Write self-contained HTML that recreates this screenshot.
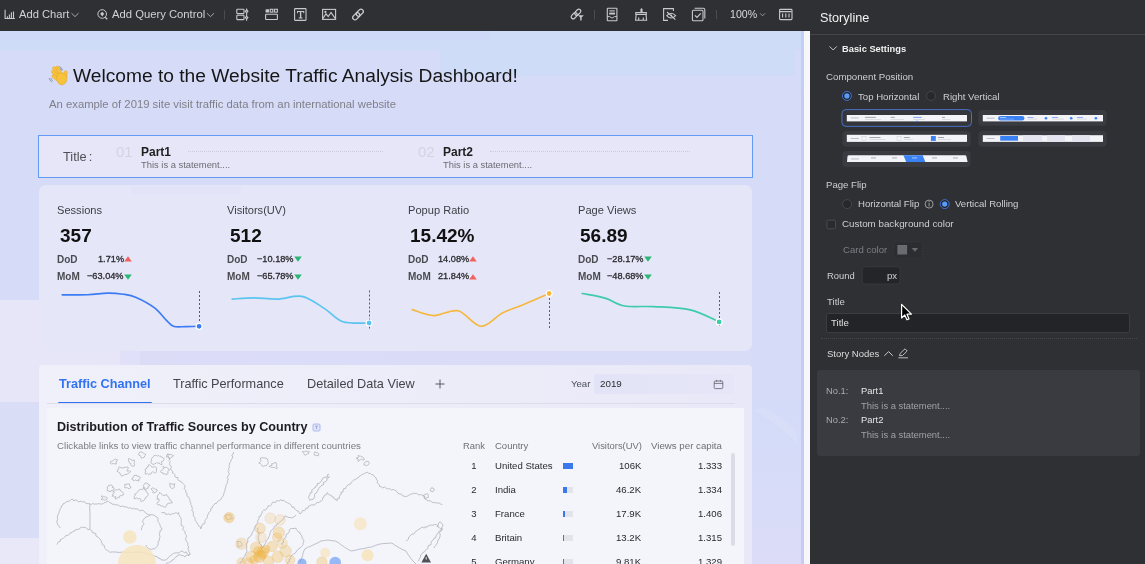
<!DOCTYPE html>
<html><head><meta charset="utf-8"><style>
html,body{margin:0;padding:0;width:1145px;height:564px;overflow:hidden;background:#303135;}
body{position:relative;font-family:"Liberation Sans",sans-serif;-webkit-font-smoothing:antialiased;}
.t{position:absolute;white-space:pre;line-height:1;will-change:transform;}
.r{position:absolute;}
</style></head><body>
<div class="r" style="left:0px;top:31px;width:801px;height:533px;background:#d6dbf8;"></div><div class="r" style="left:0px;top:31px;width:801px;height:19px;background:#cedcf8;"></div><div class="r" style="left:0px;top:31px;width:490px;height:9px;background:repeating-conic-gradient(#d2d9f8 0 25%,#cbdaf8 0 50%) 0 0/2px 2px;"></div><div class="r" style="left:440px;top:47px;width:355px;height:29px;background:#cedcf8;"></div><div class="r" style="left:0px;top:300px;width:120px;height:102px;background:#e6e6f8;"></div><div class="r" style="left:120px;top:351px;width:20px;height:14px;background:#e0e1f8;"></div><div class="r" style="left:140px;top:351px;width:612px;height:14px;background:linear-gradient(90deg,#dcdcf7,#dadcf7 60%,#d9dcf7);"></div><div class="r" style="left:0px;top:538px;width:60px;height:26px;background:#e8e8f8;"></div><div class="r" style="left:0px;top:402px;width:39px;height:136px;background:#d9ddf6;"></div><div class="r" style="left:752px;top:400px;width:49px;height:164px;background:linear-gradient(180deg,#d3dbf8 0%,#d7dcf8 50%,#dcdcf8 100%);"></div><svg class="r" style="left:752px;top:400px" width="49" height="50"><path d="M2 10 L20 22 L40 38 L46 44 L44 30 L30 18 L12 8Z" fill="#e0e2f8" fill-opacity="0.45"/></svg><div class="r" style="left:801px;top:31px;width:3px;height:533px;background:#c6cbf3;"></div><div class="r" style="left:801px;top:31px;width:3px;height:60px;background:#bfd0f6;"></div><div class="r" style="left:804px;top:31px;width:6px;height:533px;background:#f6f6fb;"></div><div class="r" style="left:0px;top:0px;width:810px;height:31px;background:#2f3034;"></div><div class="r" style="left:810px;top:0px;width:335px;height:564px;background:#2f3034;"></div><div class="r" style="left:810px;top:34px;width:335px;height:1px;background:#45464b;"></div><div class="t " style="left:73.10px;top:65.55px;font-size:19.2px;color:#161616;font-weight:normal;">Welcome to the Website Traffic Analysis Dashboard!</div><div class="t " style="left:48.70px;top:98.93px;font-size:11.3px;color:#7f8088;font-weight:normal;">An example of 2019 site visit traffic data from an international website</div><svg class="r" style="left:44px;top:62px" width="28" height="26">
<g fill="none" stroke="#8f96a8" stroke-width="1" stroke-linecap="round">
<path d="M15.6 4.6 Q17.6 5.4 18.4 7.8"/><path d="M16.2 6.6 Q17.2 7 17.6 8.4"/>
<path d="M5.2 16.6 Q5.8 18.8 8 19.8"/><path d="M6.8 16.4 Q7.2 17.8 8.4 18.4"/>
</g>
<g fill="#f7c23c" stroke="#e3a427" stroke-width="0.5">
<path d="M13.5 14.2 L8.6 6.8 A1.6 1.6 0 0 1 11.3 5.2 L16.4 12.4Z"/>
<path d="M14.8 12.8 L11.8 5.9 A1.6 1.6 0 0 1 14.6 4.6 L17.8 11.4Z"/>
<path d="M12.8 16.4 L7.6 10.6 A1.6 1.6 0 0 1 9.9 8.5 L15.2 14.2Z"/>
<path d="M13.2 19 L8.2 15.2 A1.6 1.6 0 0 1 10 12.8 L15.4 16.2Z"/>
<path d="M18.6 14 L20.4 9.4 A1.5 1.5 0 0 1 23.2 10.2 L22.6 15.8Z"/>
<path d="M12.6 15.4 Q12.8 11.4 16.6 10.8 Q21.4 10.6 22.8 15 Q23.6 20.4 19.6 22.6 Q16.8 23.6 14.6 21.4 Q12.4 19 12.6 15.4Z"/>
</g>
</svg><div class="r" style="left:38px;top:135px;width:715px;height:43px;background:#e6e6f8;border:1px solid #629af5;box-sizing:border-box;"></div><div class="t " style="left:62.70px;top:151.26px;font-size:12.8px;color:#4f5056;font-weight:normal;">Title<span style="margin-left:2px">:</span></div><div class="t " style="left:116.00px;top:144.00px;font-size:15px;color:#d3d4e2;font-weight:normal;">01</div><div class="t " style="left:140.50px;top:145.94px;font-size:12px;color:#1e1e1e;font-weight:bold;">Part1</div><div class="t " style="left:140.50px;top:159.64px;font-size:9.4px;color:#6b6c72;font-weight:normal;">This is a statement....</div><div class="r" style="left:188px;top:151px;width:195px;height:1px;border-top:1px dotted #c9cadb;"></div><div class="t " style="left:418.00px;top:144.00px;font-size:15px;color:#d3d4e2;font-weight:normal;">02</div><div class="t " style="left:442.50px;top:145.94px;font-size:12px;color:#1e1e1e;font-weight:bold;">Part2</div><div class="t " style="left:442.50px;top:159.64px;font-size:9.4px;color:#6b6c72;font-weight:normal;">This is a statement....</div><div class="r" style="left:490px;top:151px;width:200px;height:1px;border-top:1px dotted #c9cadb;"></div><div class="r" style="left:39px;top:185px;width:713px;height:166px;background:#e5e6f8;border-radius:7px;"></div><div class="r" style="left:131px;top:186px;width:110px;height:8px;background:repeating-conic-gradient(#dee1f7 0 25%,#e5e6f8 0 50%) 0 0/2px 2px;"></div><div class="t " style="left:57.40px;top:204.50px;font-size:11.1px;color:#3d3e44;font-weight:normal;">Sessions</div><div class="t " style="left:59.90px;top:225.92px;font-size:19px;color:#111;font-weight:bold;">357</div><div class="t " style="left:57.40px;top:254.84px;font-size:10px;color:#4a4b51;font-weight:bold;">DoD</div><div class="t" style="right:1021.30px;top:254.91px;font-size:9.2px;color:#2a2a2e;font-weight:normal;-webkit-text-stroke:0.3px #2a2a2e;">1.71%</div><svg class="r" style="left:124.3px;top:256.4px" width="8" height="6"><path d="M4 0.3 L7.8 5.5 L0.2 5.5Z" fill="#f2615d"/></svg><div class="t " style="left:57.40px;top:272.34px;font-size:10px;color:#4a4b51;font-weight:bold;">MoM</div><div class="t" style="right:1021.30px;top:272.41px;font-size:9.2px;color:#2a2a2e;font-weight:normal;-webkit-text-stroke:0.3px #2a2a2e;">&#8722;63.04%</div><svg class="r" style="left:124.3px;top:273.9px" width="8" height="6"><path d="M0.2 0.5 L7.8 0.5 L4 5.7Z" fill="#2ab673"/></svg><div class="t " style="left:227.40px;top:204.50px;font-size:11.1px;color:#3d3e44;font-weight:normal;">Visitors(UV)</div><div class="t " style="left:229.90px;top:225.92px;font-size:19px;color:#111;font-weight:bold;">512</div><div class="t " style="left:227.40px;top:254.84px;font-size:10px;color:#4a4b51;font-weight:bold;">DoD</div><div class="t" style="right:851.30px;top:254.91px;font-size:9.2px;color:#2a2a2e;font-weight:normal;-webkit-text-stroke:0.3px #2a2a2e;">&#8722;10.18%</div><svg class="r" style="left:294.3px;top:256.4px" width="8" height="6"><path d="M0.2 0.5 L7.8 0.5 L4 5.7Z" fill="#2ab673"/></svg><div class="t " style="left:227.40px;top:272.34px;font-size:10px;color:#4a4b51;font-weight:bold;">MoM</div><div class="t" style="right:851.30px;top:272.41px;font-size:9.2px;color:#2a2a2e;font-weight:normal;-webkit-text-stroke:0.3px #2a2a2e;">&#8722;65.78%</div><svg class="r" style="left:294.3px;top:273.9px" width="8" height="6"><path d="M0.2 0.5 L7.8 0.5 L4 5.7Z" fill="#2ab673"/></svg><div class="t " style="left:407.60px;top:204.50px;font-size:11.1px;color:#3d3e44;font-weight:normal;">Popup Ratio</div><div class="t " style="left:410.10px;top:225.92px;font-size:19px;color:#111;font-weight:bold;">15.42%</div><div class="t " style="left:407.60px;top:254.84px;font-size:10px;color:#4a4b51;font-weight:bold;">DoD</div><div class="t" style="right:676.30px;top:254.91px;font-size:9.2px;color:#2a2a2e;font-weight:normal;-webkit-text-stroke:0.3px #2a2a2e;">14.08%</div><svg class="r" style="left:469.3px;top:256.4px" width="8" height="6"><path d="M4 0.3 L7.8 5.5 L0.2 5.5Z" fill="#f2615d"/></svg><div class="t " style="left:407.60px;top:272.34px;font-size:10px;color:#4a4b51;font-weight:bold;">MoM</div><div class="t" style="right:676.30px;top:272.41px;font-size:9.2px;color:#2a2a2e;font-weight:normal;-webkit-text-stroke:0.3px #2a2a2e;">21.84%</div><svg class="r" style="left:469.3px;top:273.9px" width="8" height="6"><path d="M4 0.3 L7.8 5.5 L0.2 5.5Z" fill="#f2615d"/></svg><div class="t " style="left:577.80px;top:204.50px;font-size:11.1px;color:#3d3e44;font-weight:normal;">Page Views</div><div class="t " style="left:580.30px;top:225.92px;font-size:19px;color:#111;font-weight:bold;">56.89</div><div class="t " style="left:577.80px;top:254.84px;font-size:10px;color:#4a4b51;font-weight:bold;">DoD</div><div class="t" style="right:501.30px;top:254.91px;font-size:9.2px;color:#2a2a2e;font-weight:normal;-webkit-text-stroke:0.3px #2a2a2e;">&#8722;28.17%</div><svg class="r" style="left:644.3000000000001px;top:256.4px" width="8" height="6"><path d="M0.2 0.5 L7.8 0.5 L4 5.7Z" fill="#2ab673"/></svg><div class="t " style="left:577.80px;top:272.34px;font-size:10px;color:#4a4b51;font-weight:bold;">MoM</div><div class="t" style="right:501.30px;top:272.41px;font-size:9.2px;color:#2a2a2e;font-weight:normal;-webkit-text-stroke:0.3px #2a2a2e;">&#8722;48.68%</div><svg class="r" style="left:644.3000000000001px;top:273.9px" width="8" height="6"><path d="M0.2 0.5 L7.8 0.5 L4 5.7Z" fill="#2ab673"/></svg><svg class="r" style="left:0;top:0" width="801" height="564">
<g stroke="#5c5e66" stroke-width="1" stroke-dasharray="2 2">
<path d="M199.5 291 V 326"/><path d="M369.5 290.5 V 330"/><path d="M549.5 294 V 330"/><path d="M719.5 292 V 328"/>
</g>
<g fill="none" stroke-width="1.65" stroke-linecap="round">
<path d="M62.2 294.8 C66.5 294.8 80.3 295.1 87.8 294.8 C95.3 294.5 101.5 293.2 107.4 293.1 C113.3 293.0 118.3 293.5 123.1 294.2 C127.9 294.9 130.9 295.1 136.2 297.4 C141.4 299.7 149.3 303.8 154.6 307.9 C159.8 311.9 164.4 318.6 167.7 321.7 C171.0 324.8 171.1 325.7 174.2 326.5 C177.2 327.3 181.8 326.6 186.0 326.6 C190.2 326.6 196.9 326.4 199.1 326.3" stroke="#3b7cf5"/>
<path d="M232.2 299.1 C235.8 298.9 246.3 297.8 253.8 297.8 C261.3 297.8 269.4 299.3 277.4 299.1 C285.4 298.9 294.1 294.8 302.0 296.4 C309.9 298.0 317.8 304.4 324.6 308.6 C331.4 312.8 335.5 319.3 342.9 321.7 C350.3 324.1 364.7 322.8 369.1 323.0" stroke="#5bc4f0"/>
<path d="M412.2 309.6 C415.8 310.6 426.4 315.4 434.0 315.6 C441.6 315.8 450.2 309.0 458.0 310.8 C465.8 312.6 473.7 325.9 481.0 326.3 C488.3 326.7 495.0 316.8 502.0 313.2 C509.0 309.6 515.1 308.0 523.0 304.7 C530.9 301.4 544.8 295.4 549.1 293.5" stroke="#f5b83d"/>
<path d="M582.2 293.5 C586.0 294.3 598.0 296.0 605.1 298.1 C612.2 300.2 616.7 304.6 624.8 306.0 C632.9 307.4 642.7 306.0 653.6 306.6 C664.5 307.2 679.4 307.3 690.3 309.9 C701.2 312.4 714.3 319.9 719.1 321.9" stroke="#3ecbaa"/>
</g>
<circle cx="199.1" cy="326.3" r="3" fill="#3b7cf5" stroke="#fff" stroke-width="1.2"/>
<circle cx="369.1" cy="323" r="3" fill="#5bc4f0" stroke="#fff" stroke-width="1.2"/>
<circle cx="549.1" cy="293.5" r="3" fill="#f5b83d" stroke="#fff" stroke-width="1.2"/>
<circle cx="719.1" cy="321.9" r="3" fill="#3ecbaa" stroke="#fff" stroke-width="1.2"/>
</svg><div class="r" style="left:39px;top:365px;width:713px;height:199px;background:linear-gradient(90deg,#f0f0fa 0%,#ededf9 50%,#e8e8f8 100%);border-radius:4px 4px 0 0;"></div><div class="t " style="left:59.10px;top:378.25px;font-size:12.7px;color:#3272f2;font-weight:bold;">Traffic Channel</div><div class="t " style="left:173.00px;top:378.25px;font-size:12.7px;color:#44454b;font-weight:normal;">Traffic Performance</div><div class="t " style="left:306.50px;top:378.25px;font-size:12.7px;color:#44454b;font-weight:normal;">Detailed Data View</div><div class="r" style="left:58px;top:402px;width:94px;height:2px;background:#3272f2;border-radius:1px;"></div><div class="r" style="left:47px;top:403px;width:688px;height:1px;background:#dcdceb;"></div><div class="r" style="left:594px;top:374px;width:140px;height:20px;background:linear-gradient(90deg,#e3e3f7,#e6e6f8);border-radius:2px;"></div><div class="t " style="left:570.50px;top:379.37px;font-size:9.6px;color:#4a4f5a;font-weight:normal;">Year</div><svg class="r" style="left:434px;top:378px" width="12" height="12"><path d="M6 1.5 V10.5 M1.5 6 H10.5" stroke="#55565c" stroke-width="1"/></svg><svg class="r" style="left:713px;top:379px" width="12" height="11"><rect x="1.2" y="2" width="8.6" height="7.6" rx="1" fill="none" stroke="#606168" stroke-width="0.8"/><path d="M1.2 4.4 H9.8 M3.6 0.9 V2.6 M7.4 0.9 V2.6" stroke="#606168" stroke-width="0.8"/></svg><div class="t " style="left:600.40px;top:379.20px;font-size:9.8px;color:#2c2c30;font-weight:normal;">2019</div><div class="r" style="left:47px;top:408px;width:697px;height:156px;background:#f4f4fb;"></div><div class="t " style="left:57.30px;top:421.13px;font-size:12.6px;color:#1c1c1f;font-weight:bold;">Distribution of Traffic Sources by Country</div><svg class="r" style="left:312px;top:423px" width="9" height="9"><rect x="1" y="1" width="7" height="7" rx="1.2" fill="#dfe4f8" stroke="#9fb0ea" stroke-width="0.8"/><path d="M3 3.2 H6 M4.5 3.2 V6.2" stroke="#8fa2e6" stroke-width="0.8"/></svg><div class="t " style="left:57.30px;top:440.59px;font-size:9.7px;color:#7c7d84;font-weight:normal;">Clickable links to view traffic channel performance in different countries</div><svg class="r" style="left:47px;top:450px" width="410" height="114">
<g transform="translate(-47,-450)"><g fill="none" stroke="#a9a9b3" stroke-width="0.7" stroke-linejoin="round">
<path d="M56.9 544.5 L57.7 543.2 L58.4 541.8 L60.2 541.4 L60.4 539.5 L62.0 539.0 L63.4 538.2 L64.7 537.0 L65.7 535.6 L67.6 535.5 L69.0 534.6 L70.0 532.9 L71.9 532.7 L73.1 531.2 L75.0 531.0 L75.8 529.5 L77.4 529.4 L79.1 529.3 L80.0 528.0 L81.9 527.1 L84.0 527.6 L85.6 527.4 L86.9 528.6 L88.2 529.6 L89.9 529.1 L90.8 530.2 L92.1 530.9 L92.3 532.7 L94.0 533.0 L95.9 533.6 L95.9 536.0 L97.6 536.8 L98.8 537.8 L99.9 538.9 L100.9 540.1 L101.4 541.5 L102.0 543.0 L102.3 544.7 L104.3 545.5 L104.5 547.3 L105.3 548.7 L106.4 550.0 L108.2 550.9 L109.7 552.2"/><path d="M60.2 528.0 L59.6 526.6 L58.1 525.6 L57.5 524.2 L57.1 522.6 L57.0 521.0 L57.6 519.5 L57.4 517.9 L57.4 516.3 L58.0 514.8 L58.8 513.3 L59.2 511.6 L60.0 510.0 L60.1 508.5 L61.4 507.5 L61.3 506.0 L62.7 505.3 L63.3 503.6 L64.9 503.1 L66.0 502.0 L67.3 501.4 L68.9 501.4 L70.1 500.5 L71.2 499.4 L72.8 499.3 L73.9 501.0 L75.8 499.7 L77.1 500.6 L78.4 501.7 L80.0 501.5 L81.6 501.2 L82.8 502.1 L84.5 501.6 L85.6 503.1 L87.0 503.7 L88.5 503.6 L89.9 503.8 L91.3 504.6 L92.7 503.4 L94.1 504.2 L95.6 504.0 L97.0 504.0 L98.4 503.7 L99.8 503.8 L101.4 504.1 L102.9 503.9 L104.2 502.6 L105.7 502.7 L106.9 501.1 L108.6 501.6 L109.8 502.6 L111.2 503.1 L112.2 504.3 L114.0 504.0 L115.2 505.1 L116.9 504.6 L118.3 505.3 L119.6 506.0 L121.0 506.7 L122.8 505.8 L124.0 507.0 L125.6 506.8 L127.1 507.1 L128.4 508.2 L130.2 507.5 L131.6 509.1 L133.4 508.1 L135.0 509.0 L136.8 508.9 L138.3 509.5 L139.8 510.8 L141.6 510.4 L143.2 510.3 L144.2 511.6 L145.3 512.4 L146.3 513.6 L147.6 514.1 L148.8 514.8 L150.4 514.8"/><path d="M141.6 530.2 L141.4 528.7 L142.0 527.4 L142.1 526.0 L143.5 524.9 L143.9 523.5 L142.6 521.8 L142.9 520.4 L143.8 519.2 L144.8 517.9 L146.1 517.0 L147.7 516.5 L149.2 515.8 L150.4 514.8 L152.2 514.9 L154.0 515.0 L155.4 516.3 L157.0 517.0 L157.8 518.3 L158.0 519.8 L157.8 521.5 L158.8 522.6 L159.7 523.9 L160.1 525.3 L160.5 526.8 L161.4 528.0 L162.0 529.5 L160.1 530.6 L160.0 532.0 L159.6 533.4 L159.4 534.8 L160.0 536.3 L159.7 537.7 L159.2 539.0 L159.4 540.7 L157.8 541.8 L158.4 543.7 L157.8 545.2 L157.0 546.5 L155.9 547.8 L154.6 548.8 L153.0 548.7 L151.7 549.6 L150.0 549.0 L148.3 548.7 L147.5 547.5 L146.4 546.6 L146.0 545.0"/><path d="M161.4 512.6 L162.9 512.7 L164.6 512.4 L165.6 514.4 L167.2 514.3 L168.9 513.8 L170.2 514.8 L171.5 514.0 L173.1 513.8 L174.5 513.4 L175.9 512.6 L177.7 513.6 L179.0 512.6 L178.3 514.2 L179.6 515.3 L179.9 516.7 L180.9 517.9 L181.2 519.3 L181.0 520.8 L181.4 522.1 L181.2 523.6 L181.1 525.2 L182.9 526.1 L183.7 527.4 L182.6 529.4 L183.9 530.5 L185.2 531.6 L185.0 533.3 L185.6 534.6 L186.8 535.8 L186.1 537.4 L185.5 538.9 L186.0 540.2 L186.6 541.6 L187.7 542.8 L187.8 544.2 L187.8 545.6 L188.8 546.9 L188.0 548.7 L188.8 550.0 L188.7 551.6 L190.0 552.9 L190.0 554.4 L189.0 555.5 L187.2 555.1 L185.8 555.5 L185.0 557.0 L183.8 555.9 L182.4 555.6 L181.0 555.2 L179.5 554.9 L178.0 555.0 L177.1 556.4 L175.6 557.0 L174.6 558.2 L173.8 559.7 L172.0 560.0 L171.3 561.6 L169.8 562.0 L168.7 562.8 L167.0 562.9 L166.0 564.0"/><path d="M157.0 556.6 L158.0 558.2 L160.1 558.2 L161.1 559.9 L163.0 560.0 L165.0 560.2 L166.7 559.5 L168.0 558.0 L169.0 556.9 L170.0 555.9 L171.2 555.1 L172.3 554.2 L173.5 553.4 L175.0 553.0 L176.5 552.8 L178.0 553.0 L179.4 552.5 L180.6 551.4 L182.0 551.0 L183.2 551.8 L184.4 552.7 L186.3 551.9 L187.2 553.6 L188.3 554.6 L190.0 554.4"/><path d="M168.0 453.2 L167.8 454.7 L168.1 456.1 L169.0 457.4 L169.9 458.7 L169.0 460.4 L170.2 461.6 L169.6 463.2 L169.6 464.7 L171.0 465.9 L171.3 467.3 L170.6 469.0 L171.3 470.3 L172.7 471.4 L172.4 473.0 L173.9 473.5 L174.9 474.5 L174.8 476.6 L176.0 477.4 L177.9 477.5 L177.9 479.5 L178.7 480.7 L180.2 481.2 L181.6 481.8 L182.3 483.1 L183.4 484.0 L184.6 485.1 L185.3 486.4 L184.0 488.4 L185.2 489.5 L185.9 490.8 L185.6 492.4 L187.1 493.4 L186.8 495.1 L187.4 496.4 L189.0 497.3 L189.4 498.7 L189.9 500.1 L190.0 501.6 L190.9 502.9 L190.6 504.4 L191.7 505.7 L191.8 507.2 L192.7 508.4 L191.6 510.2 L193.1 511.3 L193.3 512.8 L193.4 514.2 L193.2 515.8 L194.4 517.0 L195.2 518.4 L194.9 520.3 L196.3 521.5 L197.0 523.0 L197.9 524.5 L198.8 526.0 L200.6 526.9 L200.7 528.9 L201.5 527.5 L201.9 525.8 L202.4 524.2 L204.6 523.7 L205.0 522.0 L204.9 520.4 L206.0 519.3 L207.0 518.2 L207.3 516.7 L207.4 515.2 L208.3 514.0 L208.8 512.7 L209.8 511.5 L211.0 510.5 L210.7 508.4 L212.4 507.6 L212.7 506.0 L214.0 505.0 L214.8 503.6 L216.6 503.3 L217.3 501.8 L218.5 500.8 L219.9 500.1 L221.2 499.2 L221.7 497.5 L222.9 496.5 L223.6 495.1 L223.8 493.5 L224.3 492.0 L225.0 490.6 L225.0 489.0 L225.6 487.5 L226.0 486.0 L226.2 484.6 L227.4 483.3 L227.2 481.8 L227.8 480.4 L228.2 479.0 L227.2 477.3 L228.0 476.0 L229.1 474.7 L229.1 473.2 L228.0 471.5 L229.0 470.2 L228.5 468.6 L229.5 467.3 L229.0 465.7 L229.6 464.3 L229.6 462.8 L231.0 461.5 L231.0 460.0 L232.0 458.6 L232.8 457.0 L231.8 455.0 L233.4 453.7 L233.5 452.0"/><path d="M266.4 508.6 L267.7 507.7 L268.1 505.9 L270.3 505.8 L271.5 504.8 L272.0 503.0 L273.2 501.9 L275.2 502.7 L276.2 501.1 L277.7 500.6 L279.5 501.0 L280.6 499.5 L281.8 500.8 L283.8 500.3 L285.1 501.5 L286.5 502.3 L288.0 503.0 L289.3 503.7 L290.6 504.5 L291.5 505.6 L292.1 507.2 L294.1 507.1 L294.5 508.9 L295.7 509.6 L296.7 510.7 L298.5 511.1 L299.1 512.7 L300.0 514.0 L301.2 513.2 L302.0 512.0 L302.4 510.4 L304.7 510.7 L305.4 509.4 L306.0 508.0 L307.8 508.3 L308.5 506.1 L310.0 505.8 L311.2 504.8 L313.0 505.0 L314.7 504.9 L315.8 503.4 L317.2 502.5 L319.0 502.6 L319.9 501.4 L321.6 500.9 L322.5 499.7 L322.6 497.8 L324.0 497.0 L324.5 495.1 L326.8 494.5 L327.1 492.5 L328.2 493.7 L329.3 495.0 L331.3 495.3 L332.0 497.0 L333.8 497.2 L334.4 499.1 L336.0 499.6 L337.2 500.6 L337.1 498.8 L339.4 498.2 L339.5 496.5 L340.0 495.0 L341.3 494.2 L340.9 492.2 L343.0 492.0 L343.2 490.4 L343.5 488.7 L345.6 488.7 L346.0 487.0 L347.0 486.0 L347.9 484.9 L349.2 484.3 L350.8 484.0 L351.3 482.4 L352.4 481.1 L353.6 480.0 L355.3 479.8 L356.4 478.4 L358.0 478.0 L359.0 476.5 L360.4 475.8 L361.6 474.7 L363.1 474.2 L364.6 473.5 L365.9 472.7 L367.5 472.2 L368.5 473.4 L370.3 473.4 L371.4 474.5 L373.0 474.7 L374.0 476.0 L375.0 477.2 L376.2 478.1 L376.5 479.7 L377.7 480.7 L377.1 482.7 L378.1 483.8 L379.4 484.8 L379.6 486.4 L381.2 486.8 L382.6 488.0 L384.6 486.8 L386.0 488.0 L387.2 489.0 L388.8 488.6 L390.2 489.0 L391.4 490.0 L393.1 489.5 L394.4 490.1 L395.8 490.4 L397.0 491.9 L398.0 493.5 L400.0 494.0 L401.6 494.3 L402.7 495.9 L404.3 496.3 L405.9 496.5 L407.5 496.1 L408.9 495.1 L410.4 494.3 L412.0 494.0 L413.7 493.2 L415.3 493.5 L416.9 493.4 L418.5 494.9 L420.1 494.5 L421.6 495.0 L422.9 495.8 L424.1 496.5 L424.4 498.6 L426.0 499.0 L426.9 500.4 L428.3 500.7 L429.9 500.8 L431.2 501.4 L432.2 502.6 L433.8 502.3 L435.4 502.8 L437.0 503.0 L439.0 502.9 L440.6 504.0 L442.3 504.6"/><path d="M266.4 508.6 L265.6 510.0 L263.5 510.1 L262.4 511.2 L262.0 513.0 L261.1 514.4 L260.8 516.1 L258.8 516.7 L259.1 518.8 L258.0 520.0 L257.7 521.5 L257.7 523.2 L256.4 524.3 L255.6 525.6 L255.0 527.0 L254.2 528.5 L254.0 530.3 L252.7 531.5 L252.0 533.0 L251.8 534.9 L250.4 535.8 L249.6 537.3 L248.0 538.0 L247.7 539.6 L247.9 541.3 L247.4 542.8 L246.0 544.0 L246.6 545.6 L246.9 547.1 L246.4 548.8 L246.7 550.4 L247.0 552.0 L245.8 553.3 L245.2 554.9 L244.4 556.3 L244.0 558.0 L242.6 558.8 L242.6 560.5 L241.9 561.8 L240.0 562.3 L240.0 564.0"/><path d="M257.0 528.0 L258.1 529.2 L257.4 530.9 L257.9 532.3 L259.5 533.3 L259.0 535.0 L258.3 536.5 L258.2 538.0 L258.7 539.5 L259.0 541.0 L259.2 542.6 L259.6 544.0 L261.5 544.9 L261.4 546.6 L262.0 548.0 L262.8 546.6 L264.2 545.5 L264.9 544.1 L265.8 542.7 L266.0 541.0 L266.9 539.7 L268.3 538.6 L268.7 537.0 L269.5 535.6 L270.0 534.0 L270.4 532.5 L270.8 531.1 L271.8 530.0 L273.0 529.0 L274.0 528.0 L274.4 526.2 L276.5 525.7 L277.0 524.0 L278.3 523.1 L279.7 522.2 L280.9 521.2 L282.0 520.0 L283.3 519.3 L284.0 518.0 L284.3 516.3 L286.0 516.0 L287.3 517.1 L288.8 517.5 L290.5 517.5 L292.0 518.0 L293.4 517.1 L294.9 516.3 L296.0 515.0"/><path d="M282.0 545.0 L281.8 543.4 L283.6 542.6 L283.3 540.9 L283.5 539.5 L284.4 538.4 L285.8 537.5 L286.0 536.0 L286.3 534.3 L288.0 533.4 L289.2 532.3 L289.2 530.4 L290.0 529.0 L291.5 528.5 L293.0 528.5 L294.6 528.6 L296.0 528.0 L296.4 529.5 L297.4 530.5 L298.2 531.8 L299.9 532.3 L300.0 534.0 L301.4 535.1 L302.0 536.6 L302.0 538.4 L303.5 539.4 L304.0 541.0 L303.1 542.3 L303.2 544.3 L302.4 545.6 L301.2 546.8 L300.0 548.0 L298.8 548.8 L297.7 549.7 L296.8 550.8 L296.0 552.0 L295.0 553.3 L293.5 554.0 L292.3 555.1 L291.0 556.0 L290.6 557.4 L290.7 558.9 L288.8 559.7 L289.6 561.5 L287.6 562.3 L288.0 564.0"/><path d="M329.1 474.3 L327.4 474.6 L327.3 477.0 L325.6 477.2 L324.0 477.6 L322.6 478.3 L322.0 480.0 L321.1 481.1 L320.3 482.3 L319.4 483.4 L317.4 483.4 L317.4 485.4 L315.9 485.9 L315.5 487.5 L314.0 488.0 L313.1 489.3 L311.6 490.2 L312.1 492.4 L310.1 493.0 L309.8 494.7 L309.0 496.0 L308.6 497.7 L309.3 499.2 L310.0 500.6 L311.0 499.3 L313.1 499.5 L314.0 498.0 L314.6 496.7 L314.5 494.9 L315.1 493.6 L316.7 492.7 L317.2 491.3 L318.0 490.0 L318.7 488.6 L319.5 487.2 L320.8 486.4 L321.7 485.2 L323.5 484.7 L323.3 482.5 L325.0 482.0 L326.2 481.1 L327.2 480.0 L326.8 478.0 L328.9 477.7 L329.0 476.0"/><path d="M405.9 541.0 L407.2 540.1 L408.5 539.2 L408.6 537.2 L409.8 536.2 L410.8 535.0 L412.0 534.0 L413.9 534.0 L414.8 532.5 L415.9 531.2 L417.3 530.5 L418.5 529.4 L420.1 528.9 L421.1 527.6 L422.5 527.2 L424.3 528.1 L425.2 526.6 L427.0 527.3 L428.0 526.0 L429.6 525.3 L431.3 525.1 L433.0 525.3 L434.6 524.4 L436.3 524.8 L437.6 525.4 L438.2 527.2 L439.5 527.9 L440.7 528.6 L442.3 528.9 L441.1 529.9 L439.6 530.7 L438.5 531.9 L438.0 533.6 L436.7 534.5 L436.0 536.0 L435.9 537.7 L433.9 538.2 L433.5 539.7 L432.1 540.6 L431.4 541.9 L431.1 543.6 L430.7 545.1 L428.4 545.3 L428.2 547.0 L427.7 548.7 L426.2 549.4 L425.3 550.7 L424.4 551.9 L422.7 552.5 L422.0 554.0 L420.4 555.0 L420.9 557.1 L419.4 558.2 L419.2 559.9 L418.1 561.2"/><path d="M437.0 527.0 L437.8 525.8 L438.3 524.4 L438.7 522.9 L440.0 522.0 L441.5 522.9 L442.5 524.3 L443.0 526.0 L441.7 527.1 L442.0 528.8 L442.0 530.4 L440.2 531.3 L439.6 532.7 L440.1 534.4 L440.2 536.0 L439.6 537.4 L439.3 538.9 L438.0 540.0 L437.6 541.5 L437.4 543.0 L436.5 544.2 L435.8 545.5 L434.5 546.6 L434.0 548.0"/><path d="M89.9 503.8 L89.7 507.0 L89.8 510.1 L90.0 513.3 L90.0 516.5 L89.9 519.6 L90.0 522.8 L90.0 525.9 L89.9 529.1"/><path d="M109.7 552.2 L112.9 551.9 L116.1 552.1 L119.3 552.5 L122.5 552.0 L125.7 552.2 L128.8 552.3 L132.0 552.4 L135.2 552.0 L138.4 552.1 L141.6 552.2 L144.7 552.9 L147.8 553.9 L150.8 554.8 L153.8 556.0 L157.0 556.6"/><path d="M300.0 562.0 L301.4 558.8 L302.6 555.6 L303.3 552.2 L304.8 549.0 L307.4 547.4 L310.3 546.4 L313.0 545.0 L317.1 543.2 L321.0 541.0 L324.5 540.5 L328.0 540.0 L331.6 540.6 L335.2 541.0 L338.0 542.4 L340.4 544.3 L343.0 546.0 L345.6 547.9 L348.4 549.5 L351.3 551.0 L355.7 550.2 L360.0 549.0 L363.9 548.6 L367.7 547.5 L371.6 547.0 L375.7 545.3 L380.0 544.0 L383.9 543.5 L387.9 543.3 L391.8 543.0 L394.8 545.1 L398.0 547.0 L401.8 549.2 L405.9 551.0 L407.8 554.1 L409.9 557.0 L412.0 560.0 L416.0 564.0"/><path d="M123.7 494.7 L122.3 495.2 L120.9 495.6 L119.6 496.1 L119.2 497.5 L118.1 497.7 L117.1 497.8 L116.3 498.7 L115.4 499.0 L115.2 497.8 L115.8 496.6 L114.4 496.9 L113.2 495.8 L111.9 496.3 L112.8 495.6 L112.9 494.4 L113.2 493.3 L114.4 492.8 L113.7 492.0 L112.9 491.2 L114.2 491.1 L115.2 490.4 L116.2 489.8 L117.5 489.7 L118.7 489.5 L119.7 488.9 L120.0 490.3 L121.2 491.0 L122.1 491.7 L123.0 492.5 L123.3 493.7 L123.7 494.7Z"/><path d="M114.1 487.8 L114.1 489.3 L113.1 489.9 L112.2 490.6 L111.0 490.7 L110.2 492.0 L109.0 490.9 L107.5 491.0 L107.0 489.9 L107.6 488.9 L107.4 487.0 L108.5 485.5 L109.1 486.0 L110.1 484.9 L111.5 485.0 L112.5 486.0 L112.3 487.4 L114.1 487.8Z"/><path d="M148.1 494.6 L147.9 495.7 L147.1 496.5 L145.9 497.1 L145.3 498.0 L145.0 499.2 L144.1 499.9 L143.4 500.9 L142.1 501.0 L141.1 501.6 L140.5 500.6 L140.8 499.3 L139.8 498.4 L138.6 498.8 L137.5 498.6 L136.3 497.8 L135.1 499.0 L133.9 498.3 L134.2 498.0 L134.3 496.7 L135.0 495.5 L134.8 494.1 L136.1 493.7 L136.9 492.7 L137.9 491.5 L138.6 490.4 L139.6 489.8 L140.6 489.3 L142.1 489.7 L142.8 488.6 L144.0 488.8 L144.8 489.9 L145.9 490.1 L146.0 491.5 L147.2 492.3 L147.9 493.3 L148.1 494.6Z"/><path d="M172.0 501.8 L172.2 503.0 L171.0 502.8 L170.0 503.1 L169.0 503.2 L168.0 503.5 L167.1 504.1 L166.4 505.1 L166.2 506.3 L165.4 507.3 L164.4 507.1 L163.5 506.7 L162.8 505.8 L161.5 506.3 L160.6 505.8 L160.0 504.7 L158.8 504.9 L157.8 504.8 L157.1 503.8 L157.2 502.5 L158.5 502.0 L158.9 500.9 L159.7 500.1 L158.9 499.2 L157.9 499.0 L156.7 499.3 L157.8 498.5 L157.2 497.2 L157.4 496.1 L157.8 495.1 L158.7 494.3 L159.4 493.5 L159.5 492.4 L160.4 493.1 L161.4 493.6 L162.0 494.6 L162.8 495.4 L163.8 495.4 L164.9 495.2 L165.9 495.1 L166.8 494.5 L167.0 495.8 L167.8 496.7 L169.0 497.4 L169.1 498.7 L169.5 499.8 L170.8 500.0 L171.2 501.1 L172.0 501.8Z"/><path d="M130.7 471.6 L129.9 472.4 L129.1 473.2 L127.9 473.3 L127.2 474.3 L126.1 474.5 L124.8 474.4 L123.9 475.4 L122.7 475.4 L121.9 476.4 L121.1 475.3 L120.3 474.6 L120.2 473.3 L119.1 472.8 L118.5 472.0 L117.0 471.3 L117.2 470.3 L118.3 469.7 L119.0 468.9 L118.4 467.5 L119.4 466.8 L120.6 467.5 L122.0 468.0 L123.0 468.1 L124.0 467.4 L125.1 467.5 L126.1 467.1 L127.1 467.0 L128.2 467.3 L128.2 468.4 L127.5 469.2 L127.1 470.2 L127.1 471.2 L128.3 470.9 L129.5 470.8 L130.7 471.6Z"/><path d="M140.6 477.6 L139.9 478.4 L139.1 479.0 L138.5 480.1 L138.9 481.3 L138.1 480.2 L136.6 480.6 L135.6 479.9 L134.3 480.6 L133.2 480.4 L132.7 479.2 L131.6 478.9 L133.2 477.9 L133.2 476.6 L133.9 475.6 L135.1 475.5 L136.2 474.9 L137.0 476.3 L138.1 476.0 L139.0 476.6 L140.6 477.6Z"/><path d="M156.4 469.8 L156.6 471.3 L155.9 472.6 L154.8 473.1 L153.7 472.0 L152.6 471.9 L151.5 472.5 L150.8 474.1 L149.6 474.1 L148.5 474.6 L147.4 473.4 L146.2 474.0 L145.1 473.8 L145.2 472.3 L145.7 471.2 L145.3 470.2 L145.1 469.2 L146.2 469.0 L146.8 468.1 L147.0 466.9 L148.3 466.5 L148.2 465.2 L149.1 464.5 L150.1 465.2 L151.0 466.1 L151.9 466.9 L153.1 467.2 L154.5 466.7 L155.6 467.1 L156.6 467.8 L156.4 469.8Z"/><path d="M164.1 459.7 L163.3 460.4 L162.7 461.5 L161.5 461.5 L161.5 462.6 L161.8 463.7 L162.0 464.8 L160.8 464.7 L160.0 463.6 L158.9 463.1 L157.7 463.1 L156.7 462.6 L155.9 463.4 L154.8 463.5 L154.1 464.4 L153.0 464.3 L151.4 463.3 L150.9 462.1 L151.3 460.9 L151.5 459.7 L151.6 458.4 L152.6 457.7 L153.2 456.8 L153.8 455.9 L155.1 455.1 L156.6 455.7 L157.6 456.0 L158.6 455.3 L159.5 456.3 L160.6 456.0 L161.2 457.0 L162.2 457.3 L163.1 457.9 L164.1 458.5 L164.1 459.7Z"/><path d="M169.6 470.0 L168.4 470.5 L167.8 471.6 L168.0 473.2 L167.2 474.5 L165.9 474.2 L164.6 473.9 L163.1 474.0 L162.7 472.7 L161.1 472.5 L160.6 471.3 L161.4 470.2 L162.6 469.7 L163.6 468.9 L163.1 467.6 L163.1 466.2 L164.6 467.5 L166.2 467.2 L167.5 468.1 L169.0 469.2 L169.6 470.0Z"/><path d="M116.0 461.7 L116.1 462.9 L116.3 464.1 L114.4 463.7 L113.4 463.5 L111.7 464.0 L110.3 463.2 L110.4 462.1 L110.9 461.2 L112.1 461.3 L113.1 460.6 L114.5 459.4 L115.4 459.2 L116.3 459.4 L117.3 459.7 L117.0 461.0 L116.0 461.7Z"/><path d="M134.3 462.3 L134.2 463.7 L134.6 465.1 L133.9 466.3 L132.5 466.2 L131.1 465.6 L130.6 464.6 L130.8 463.5 L129.7 463.2 L129.2 462.0 L128.5 461.0 L128.6 459.8 L128.5 458.7 L129.9 458.8 L130.9 459.7 L132.0 460.2 L133.1 460.4 L134.2 459.9 L134.3 461.1 L134.3 462.3Z"/><path d="M150.1 485.3 L149.0 486.1 L147.9 486.7 L148.1 488.1 L147.0 488.7 L145.9 489.2 L144.7 488.8 L144.6 487.5 L143.2 487.5 L143.7 486.5 L143.5 485.3 L144.3 484.2 L145.1 483.0 L146.4 483.1 L147.1 482.9 L148.0 484.2 L149.0 484.8 L150.1 485.3Z"/><path d="M130.0 486.4 L131.0 487.0 L130.5 488.0 L129.4 488.5 L128.1 488.6 L127.3 487.6 L126.6 487.6 L125.6 487.9 L124.6 487.7 L125.0 486.3 L124.8 484.7 L124.7 484.3 L125.8 484.4 L127.0 484.4 L128.0 483.7 L129.6 484.1 L129.4 485.0 L130.0 486.4Z"/><path d="M174.3 486.2 L174.3 487.3 L172.8 488.4 L172.0 488.7 L171.2 487.7 L170.1 487.0 L170.3 486.1 L169.7 485.7 L170.0 484.5 L169.7 483.2 L170.8 483.8 L172.0 484.0 L173.5 484.4 L175.1 483.8 L174.1 484.8 L174.3 486.2Z"/><path d="M107.3 498.0 L106.5 499.7 L105.4 500.1 L103.6 499.6 L102.6 499.9 L101.1 499.4 L102.0 498.9 L102.6 497.9 L102.1 496.9 L101.2 496.4 L102.5 495.9 L103.6 496.7 L104.2 496.8 L105.4 497.1 L106.5 497.0 L107.3 498.0Z"/><path d="M157.2 489.8 L157.1 490.9 L156.4 491.9 L156.1 492.1 L155.0 492.3 L153.9 493.1 L152.7 492.6 L153.2 491.3 L152.7 490.6 L151.7 489.9 L151.2 488.8 L152.1 487.9 L153.9 488.4 L154.3 488.7 L155.7 489.4 L157.2 489.8Z"/><path d="M173.6 455.6 L172.2 457.0 L171.1 457.4 L170.4 458.4 L168.9 458.5 L168.8 458.0 L167.9 456.9 L166.5 457.0 L166.5 455.5 L167.3 454.4 L168.6 454.6 L170.1 454.5 L171.2 454.6 L171.4 454.7 L172.5 455.1 L173.6 455.6Z"/><path d="M145.8 455.0 L144.8 455.9 L143.9 457.7 L142.8 457.5 L142.0 458.4 L140.9 457.7 L140.8 456.5 L140.2 455.5 L139.0 455.4 L138.6 454.9 L138.9 453.3 L139.6 452.2 L140.7 452.0 L141.9 452.0 L143.3 453.2 L144.2 453.7 L145.2 454.1 L145.8 455.0Z"/><path d="M231.9 517.6 L232.5 518.5 L230.6 518.9 L229.3 518.9 L228.4 519.9 L227.2 519.7 L226.4 518.8 L226.6 517.7 L225.1 516.8 L225.7 515.4 L226.9 514.6 L228.1 514.9 L229.4 514.6 L230.8 514.9 L231.0 515.3 L231.2 516.6 L231.9 517.6Z"/><path d="M242.0 544.3 L242.2 544.7 L241.6 546.1 L240.2 546.0 L239.2 546.9 L237.8 547.0 L237.8 545.6 L238.1 544.2 L238.4 543.2 L237.2 542.8 L237.0 541.6 L238.0 541.3 L239.1 541.7 L240.1 541.1 L240.8 542.4 L241.7 543.3 L242.0 544.3Z"/><path d="M268.5 462.4 L267.5 464.1 L267.0 465.1 L265.9 465.8 L264.6 465.8 L263.5 466.4 L262.2 466.0 L261.5 464.8 L260.5 463.9 L259.8 463.1 L258.7 463.1 L259.9 462.4 L260.7 461.4 L260.9 460.2 L260.3 459.1 L260.7 458.0 L261.8 457.8 L263.0 457.8 L264.1 457.8 L265.1 458.2 L266.2 458.2 L267.1 458.6 L267.8 460.4 L267.9 461.5 L268.5 462.4Z"/><path d="M276.4 466.5 L277.4 468.2 L275.6 468.4 L274.6 467.4 L273.2 467.5 L272.4 467.4 L271.2 467.5 L270.3 466.5 L269.1 466.5 L270.4 465.8 L271.9 465.5 L271.7 463.7 L272.9 463.8 L274.0 463.2 L275.0 462.5 L276.2 462.8 L276.7 464.6 L276.4 466.5Z"/><path d="M308.5 453.6 L308.3 453.6 L306.8 454.2 L305.7 455.2 L304.1 454.4 L303.9 453.7 L303.2 452.6 L302.2 451.6 L303.4 451.6 L304.6 451.6 L306.1 450.8 L306.5 451.5 L307.5 451.7 L308.6 451.3 L309.5 451.8 L308.4 452.4 L308.5 453.6Z"/><path d="M318.8 453.8 L318.7 454.8 L318.3 455.8 L316.9 455.5 L315.7 455.3 L314.3 455.1 L314.0 454.1 L314.1 453.7 L314.8 453.0 L314.7 451.8 L316.6 452.5 L317.9 452.8 L318.8 453.8Z"/><path d="M364.0 458.3 L364.3 459.8 L363.0 460.2 L361.8 459.1 L360.5 459.6 L359.1 460.3 L358.4 461.6 L357.8 460.4 L358.2 459.2 L357.4 458.2 L356.1 458.3 L358.0 458.0 L358.3 456.6 L358.3 455.1 L359.4 456.3 L360.6 455.9 L361.5 456.8 L362.8 457.0 L364.0 458.3Z"/><path d="M369.2 463.3 L368.3 464.7 L367.6 464.8 L366.7 465.8 L365.5 465.3 L364.0 465.0 L364.2 463.4 L364.4 462.8 L365.0 462.1 L365.7 461.7 L367.0 461.3 L368.7 461.7 L369.2 463.3Z"/><path d="M428.4 496.4 L428.4 497.3 L426.5 497.7 L425.7 498.8 L424.8 498.0 L424.6 496.2 L423.3 495.2 L425.1 494.5 L426.4 494.0 L427.4 493.5 L428.0 494.2 L428.0 495.3 L428.4 496.4Z"/><path d="M434.6 489.8 L433.7 490.7 L433.0 491.8 L432.1 491.5 L430.7 491.3 L430.4 490.1 L430.4 489.3 L431.0 489.0 L431.6 487.7 L433.3 488.2 L433.3 489.2 L434.6 489.8Z"/>
</g>
<g>
<circle cx="129.9" cy="537" r="6.7" fill="#f6e4bd" fill-opacity="0.85"/>
<circle cx="137" cy="564" r="19" fill="#f6e4bd" fill-opacity="0.85"/>
<circle cx="360.4" cy="523.8" r="6.5" fill="#f6e6c4" fill-opacity="0.8"/>
<circle cx="325.3" cy="552.8" r="5" fill="#f6e6c4" fill-opacity="0.8"/>
<circle cx="367.5" cy="555.2" r="6" fill="#f6e4bd" fill-opacity="0.9"/>
</g>
<g stroke="#d99a30" stroke-opacity="0.25" stroke-width="0.6">
<circle cx="229" cy="517.6" r="5.3" fill="#f0bb50" fill-opacity="0.45"/>
<circle cx="270.3" cy="518.2" r="5.3" fill="#f0c060" fill-opacity="0.2"/><circle cx="280" cy="519.9" r="5.3" fill="#f0c060" fill-opacity="0.2"/><circle cx="260.1" cy="528.4" r="5.3" fill="#f0bb50" fill-opacity="0.3"/>
<circle cx="278.8" cy="532.5" r="5.8" fill="#f0bb50" fill-opacity="0.35"/><circle cx="261" cy="537.5" r="5.3" fill="#f0c060" fill-opacity="0.2"/><circle cx="241.4" cy="543.7" r="5.8" fill="#f0c060" fill-opacity="0.3"/>
<circle cx="277" cy="537.5" r="4.6" fill="#f0bb50" fill-opacity="0.3"/><circle cx="282.2" cy="543.1" r="5.2" fill="#f0bb50" fill-opacity="0.25"/><circle cx="256.1" cy="547.7" r="5.8" fill="#f0bb50" fill-opacity="0.35"/>
<circle cx="262.9" cy="552.2" r="5.8" fill="#f0b440" fill-opacity="0.45"/><circle cx="272" cy="546.5" r="5.2" fill="#f0bb50" fill-opacity="0.35"/><circle cx="285.6" cy="551.1" r="5.8" fill="#f0bb50" fill-opacity="0.3"/>
<circle cx="251.6" cy="556.8" r="5.8" fill="#f0bb50" fill-opacity="0.35"/><circle cx="259.5" cy="556.8" r="5.8" fill="#f0b440" fill-opacity="0.45"/><circle cx="277.7" cy="556.8" r="5.8" fill="#f0bb50" fill-opacity="0.35"/>
<circle cx="268.6" cy="561.3" r="5.2" fill="#f0bb50" fill-opacity="0.35"/><circle cx="241.4" cy="562.4" r="4.6" fill="#f0bb50" fill-opacity="0.3"/><circle cx="321.9" cy="562" r="5.2" fill="#f0bb50" fill-opacity="0.35"/>
<circle cx="258" cy="551" r="4.5" fill="#f0b440" fill-opacity="0.4"/><circle cx="262" cy="555" r="4.5" fill="#f0b440" fill-opacity="0.4"/><circle cx="254" cy="560" r="4.5" fill="#f0b440" fill-opacity="0.35"/><circle cx="266" cy="549" r="4" fill="#f0b440" fill-opacity="0.35"/>
<circle cx="248" cy="563" r="5" fill="#f0bb50" fill-opacity="0.3"/><circle cx="290" cy="560" r="5" fill="#f0bb50" fill-opacity="0.3"/>
</g>
<g fill="#4a86ee" fill-opacity="0.55">
<circle cx="302" cy="563" r="4.5"/><circle cx="335.2" cy="562.5" r="5.8"/>
</g>
<path d="M426.2 553.8 L431 562.5 H421.4Z" fill="#505158"/>
<path d="M426.2 557 V559.6" stroke="#f4f4fb" stroke-width="0.9"/>
</g></svg><div class="t " style="left:463.40px;top:440.84px;font-size:9.4px;color:#6f7077;font-weight:normal;">Rank</div><div class="t " style="left:495.30px;top:440.76px;font-size:9.5px;color:#6f7077;font-weight:normal;">Country</div><div class="t" style="right:503.60px;top:440.84px;font-size:9.4px;color:#6f7077;font-weight:normal;">Visitors(UV)</div><div class="t" style="right:422.80px;top:440.59px;font-size:9.7px;color:#6f7077;font-weight:normal;">Views per capita</div><div class="t" style="left:424.00px;width:100px;text-align:center;top:460.76px;font-size:9.5px;color:#2a2a2e;font-weight:normal;">1</div><div class="t " style="left:495.30px;top:460.67px;font-size:9.6px;color:#2a2a2e;font-weight:normal;">United States</div><div class="r" style="left:563px;top:462.8px;width:10px;height:6px;background:#e3e3ec;"></div><div class="r" style="left:563px;top:462.8px;width:10px;height:6px;background:#3a78ec;"></div><div class="t" style="right:503.60px;top:460.67px;font-size:9.6px;color:#2a2a2e;font-weight:normal;">106K</div><div class="t" style="right:422.80px;top:460.67px;font-size:9.6px;color:#2a2a2e;font-weight:normal;">1.333</div><div class="t" style="left:424.00px;width:100px;text-align:center;top:484.76px;font-size:9.5px;color:#2a2a2e;font-weight:normal;">2</div><div class="t " style="left:495.30px;top:484.67px;font-size:9.6px;color:#2a2a2e;font-weight:normal;">India</div><div class="r" style="left:563px;top:486.8px;width:10px;height:6px;background:#e3e3ec;"></div><div class="r" style="left:563px;top:486.8px;width:4.3px;height:6px;background:#3a78ec;"></div><div class="t" style="right:503.60px;top:484.67px;font-size:9.6px;color:#2a2a2e;font-weight:normal;">46.2K</div><div class="t" style="right:422.80px;top:484.67px;font-size:9.6px;color:#2a2a2e;font-weight:normal;">1.334</div><div class="t" style="left:424.00px;width:100px;text-align:center;top:508.76px;font-size:9.5px;color:#2a2a2e;font-weight:normal;">3</div><div class="t " style="left:495.30px;top:508.67px;font-size:9.6px;color:#2a2a2e;font-weight:normal;">France</div><div class="r" style="left:563px;top:510.79999999999995px;width:10px;height:6px;background:#e3e3ec;"></div><div class="r" style="left:563px;top:510.79999999999995px;width:1.7px;height:6px;background:#3a78ec;"></div><div class="t" style="right:503.60px;top:508.67px;font-size:9.6px;color:#2a2a2e;font-weight:normal;">17.9K</div><div class="t" style="right:422.80px;top:508.67px;font-size:9.6px;color:#2a2a2e;font-weight:normal;">1.406</div><div class="t" style="left:424.00px;width:100px;text-align:center;top:532.76px;font-size:9.5px;color:#2a2a2e;font-weight:normal;">4</div><div class="t " style="left:495.30px;top:532.67px;font-size:9.6px;color:#2a2a2e;font-weight:normal;">Britain</div><div class="r" style="left:563px;top:534.8px;width:10px;height:6px;background:#e3e3ec;"></div><div class="r" style="left:563px;top:534.8px;width:1.3px;height:6px;background:#3a78ec;"></div><div class="t" style="right:503.60px;top:532.67px;font-size:9.6px;color:#2a2a2e;font-weight:normal;">13.2K</div><div class="t" style="right:422.80px;top:532.67px;font-size:9.6px;color:#2a2a2e;font-weight:normal;">1.315</div><div class="t" style="left:424.00px;width:100px;text-align:center;top:556.76px;font-size:9.5px;color:#2a2a2e;font-weight:normal;">5</div><div class="t " style="left:495.30px;top:556.67px;font-size:9.6px;color:#2a2a2e;font-weight:normal;">Germany</div><div class="r" style="left:563px;top:558.8px;width:10px;height:6px;background:#e3e3ec;"></div><div class="r" style="left:563px;top:558.8px;width:1px;height:6px;background:#3a78ec;"></div><div class="t" style="right:503.60px;top:556.67px;font-size:9.6px;color:#2a2a2e;font-weight:normal;">9.81K</div><div class="t" style="right:422.80px;top:556.67px;font-size:9.6px;color:#2a2a2e;font-weight:normal;">1.329</div><div class="r" style="left:731px;top:453px;width:4px;height:93px;background:#dcdce6;border-radius:2px;"></div><svg class="r" style="left:810px;top:0" width="335" height="564">
<g transform="translate(-810,0)">
<path d="M829.6 46.4 L833.2 50 L836.8 46.4" fill="none" stroke="#c8c8cc" stroke-width="1"/>
<circle cx="846.9" cy="95.9" r="4.5" fill="#25262a" stroke="#3f72d6" stroke-width="1"/>
<circle cx="846.9" cy="95.9" r="2.6" fill="#5b9bf8"/>
<circle cx="931" cy="95.9" r="4.5" fill="#27282c" stroke="#45464b" stroke-width="1"/>
<rect x="841.9" y="109.6" width="129.6" height="16.8" rx="4" fill="#35363b" stroke="#4a6fc4" stroke-width="1"/>
<rect x="846.8" y="115" width="120.2" height="6.4" fill="#f3f3f8"/>
<rect x="978.3" y="110.1" width="128.3" height="15.7" rx="4" fill="#3a3b40"/>
<rect x="982.8" y="115" width="120.2" height="6.4" fill="#f3f3f8"/>
<rect x="998.2" y="115.9" width="26.2" height="4.6" rx="2.3" fill="#3a82f4"/>
<circle cx="1046" cy="118.2" r="1.3" fill="#3a82f4"/><circle cx="1071.2" cy="118.2" r="1.3" fill="#3a82f4"/><circle cx="1095.9" cy="118.2" r="1.3" fill="#3a82f4"/>
<rect x="842.3" y="131.1" width="128.3" height="15.7" rx="4" fill="#3a3b40"/>
<rect x="846.8" y="134.8" width="120.2" height="7.1" fill="#f3f3f8"/>
<rect x="930.9" y="136" width="4.9" height="4.9" fill="#3a82f4"/>
<rect x="978.3" y="131.1" width="128.3" height="15.7" rx="4" fill="#3a3b40"/>
<rect x="982.8" y="135.2" width="120.2" height="6.7" fill="#f3f3f8"/>
<rect x="1000.2" y="136" width="17.8" height="4.7" fill="#3a82f4"/>
<rect x="842.3" y="151" width="128.3" height="16" rx="4" fill="#3a3b40"/>
<path d="M847 162 L847.5 156 Q848 155.3 849 155.3 L965 155.3 Q966 155.3 966.3 156 L967.6 162Z" fill="#f3f3f8"/>
<path d="M903.4 155.3 H922.6 L925.4 162 H906.2Z" fill="#3a82f4"/>
<g fill="#8e8f9c">
<rect x="850.8" y="117.6" width="8" height="0.7" fill="#a5a6b2"/>
<rect x="864.9" y="116.9" width="11" height="0.8"/><rect x="864.9" y="119" width="16" height="0.5" fill="#c5c6d0"/>
<rect x="890.6" y="116.9" width="4.2" height="0.8"/><rect x="890.6" y="119" width="13.4" height="0.5" fill="#c5c6d0"/>
<rect x="913.2" y="116.9" width="8.5" height="0.8" fill="#5b8ff0"/><rect x="913.2" y="119" width="11.6" height="0.5" fill="#c5c6d0"/><rect x="916" y="120.8" width="2" height="0.8" fill="#3a82f4"/>
<rect x="942" y="116.9" width="3" height="0.8"/><rect x="942" y="119" width="8.5" height="0.5" fill="#c5c6d0"/>
<rect x="986.6" y="117.8" width="8" height="0.7" fill="#a5a6b2"/>
<rect x="1000" y="117" width="6" height="0.7" fill="#cfe0ff"/><rect x="1000" y="118.8" width="14" height="0.5" fill="#9ec0ff"/>
<rect x="1027.5" y="117" width="6" height="0.7" fill="#5b8ff0"/><rect x="1027.5" y="118.8" width="10" height="0.5" fill="#c5c6d0"/>
<rect x="1052" y="117" width="6" height="0.7" fill="#5b8ff0"/><rect x="1052" y="118.8" width="12" height="0.5" fill="#c5c6d0"/>
<rect x="1077" y="117" width="6" height="0.7" fill="#5b8ff0"/><rect x="1077" y="118.8" width="10" height="0.5" fill="#c5c6d0"/>
<rect x="850.8" y="138.2" width="8" height="0.7" fill="#a5a6b2"/>
<rect x="869.5" y="137.2" width="11" height="0.8"/><rect x="869.5" y="139.2" width="16" height="0.5" fill="#c5c6d0"/>
<rect x="903.8" y="137.2" width="6" height="0.8"/><rect x="903.8" y="139.2" width="9" height="0.5" fill="#c5c6d0"/>
<rect x="938" y="137.2" width="6" height="0.8"/><rect x="938" y="139.2" width="13" height="0.5" fill="#c5c6d0"/>
<rect x="862" y="136.4" width="4" height="4" fill="none" stroke="#c5c6d0" stroke-width="0.4"/><rect x="897" y="136.4" width="4" height="4" fill="none" stroke="#c5c6d0" stroke-width="0.4"/>
<rect x="986.6" y="138.2" width="8" height="0.7" fill="#a5a6b2"/>
<rect x="851" y="158.6" width="8" height="0.7" fill="#a5a6b2"/><rect x="871" y="157.6" width="5" height="0.7"/><rect x="892" y="157.6" width="5" height="0.7"/><rect x="912" y="157.6" width="5" height="0.7" fill="#cfe0ff"/><rect x="932" y="157.6" width="5" height="0.7"/><rect x="953" y="157.6" width="5" height="0.7"/>
</g>
<rect x="1023" y="135.2" width="19" height="6.7" fill="#e3e4f0"/><rect x="1047" y="135.2" width="18" height="6.7" fill="#e3e4f0"/><rect x="1072" y="135.2" width="18" height="6.7" fill="#e3e4f0"/>
<circle cx="847.1" cy="204.1" r="4.5" fill="#27282c" stroke="#45464b" stroke-width="1"/>
<circle cx="929.1" cy="204.1" r="4" fill="none" stroke="#a8a9ad" stroke-width="0.9"/>
<path d="M929.1 202.9 V206.4" stroke="#a8a9ad" stroke-width="0.9"/><circle cx="929.1" cy="201.6" r="0.55" fill="#a8a9ad"/>
<circle cx="944.7" cy="204.1" r="4.5" fill="#25262a" stroke="#3f72d6" stroke-width="1"/>
<circle cx="944.7" cy="204.1" r="2.6" fill="#5b9bf8"/>
<rect x="826.9" y="220.2" width="8.6" height="8.6" rx="1" fill="#2a2b2f" stroke="#4a4b50" stroke-width="1"/>
<rect x="893.9" y="241.8" width="28.6" height="16.4" rx="1" fill="#2c2d31" stroke="#3d3e43" stroke-width="0.8" stroke-dasharray="1.5 1.5"/>
<rect x="897.4" y="245" width="9.7" height="9.5" fill="#6a6b70"/>
<path d="M911.7 248 H918.1 L914.9 251.8Z" fill="#6a6b70"/>
<rect x="862.2" y="266.8" width="37.8" height="17.2" rx="3" fill="#242529" stroke="#3a3b40" stroke-width="0.8"/>
<path d="M884.4 355.8 L888.6 351.6 L892.8 355.8" fill="none" stroke="#c8c8cc" stroke-width="1"/>
<path d="M899.5 355.6 L900.2 353.4 L905 348.8 L907.2 351 L902.4 355.6Z M898.4 357.8 H908" fill="none" stroke="#c8c8cc" stroke-width="0.9"/>
</g>
</svg><div class="t " style="left:820.00px;top:12.25px;font-size:12.7px;color:#f2f2f2;font-weight:normal;">Storyline</div><div class="t " style="left:842.40px;top:44.83px;font-size:9.3px;color:#f0f0f0;font-weight:bold;">Basic Settings</div><div class="t " style="left:826.30px;top:71.79px;font-size:9.7px;color:#cfcfd2;font-weight:normal;">Component Position</div><div class="t " style="left:858.30px;top:91.87px;font-size:9.6px;color:#cfcfd2;font-weight:normal;">Top Horizontal</div><div class="t " style="left:942.70px;top:91.87px;font-size:9.6px;color:#cfcfd2;font-weight:normal;">Right Vertical</div><div class="t " style="left:825.90px;top:179.77px;font-size:9.6px;color:#cfcfd2;font-weight:normal;">Page Flip</div><div class="t " style="left:857.80px;top:199.47px;font-size:9.6px;color:#cfcfd2;font-weight:normal;">Horizontal Flip</div><div class="t " style="left:955.40px;top:199.47px;font-size:9.6px;color:#cfcfd2;font-weight:normal;">Vertical Rolling</div><div class="t " style="left:841.70px;top:218.90px;font-size:9.8px;color:#cfcfd2;font-weight:normal;">Custom background color</div><div class="t " style="left:842.50px;top:245.27px;font-size:9.6px;color:#7d7e83;font-weight:normal;">Card color</div><div class="t " style="left:826.60px;top:271.34px;font-size:9.4px;color:#cfcfd2;font-weight:normal;">Round</div><div class="t " style="left:886.90px;top:271.17px;font-size:9.6px;color:#cfcfd2;font-weight:normal;">px</div><div class="t " style="left:826.60px;top:296.67px;font-size:9.6px;color:#cfcfd2;font-weight:normal;">Title</div><div class="r" style="left:826px;top:313px;width:304px;height:20px;background:#232428;border:1px solid #3c3d42;box-sizing:border-box;border-radius:2px;"></div><div class="t " style="left:830.90px;top:318.37px;font-size:9.6px;color:#e0e0e0;font-weight:normal;">Title</div><div class="r" style="left:821px;top:338px;width:316px;height:1px;border-top:1px dotted #45464b;"></div><div class="t " style="left:826.60px;top:349.26px;font-size:9.5px;color:#dcdcdc;font-weight:normal;">Story Nodes</div><div class="r" style="left:817px;top:370px;width:323px;height:86px;background:#3a3b40;border-radius:3px;"></div><div class="t " style="left:826.40px;top:386.44px;font-size:9.4px;color:#a9aaae;font-weight:normal;">No.1:</div><div class="t " style="left:860.80px;top:386.44px;font-size:9.4px;color:#e6e6e6;font-weight:normal;">Part1</div><div class="t " style="left:860.80px;top:400.84px;font-size:9.4px;color:#a0a1a6;font-weight:normal;">This is a statement....</div><div class="t " style="left:826.40px;top:415.34px;font-size:9.4px;color:#a9aaae;font-weight:normal;">No.2:</div><div class="t " style="left:860.80px;top:415.34px;font-size:9.4px;color:#e6e6e6;font-weight:normal;">Part2</div><div class="t " style="left:860.80px;top:429.84px;font-size:9.4px;color:#a0a1a6;font-weight:normal;">This is a statement....</div><svg class="r" style="left:0;top:0" width="810" height="31">
<g fill="none" stroke="#c9c9cd" stroke-width="1.1">
<path d="M5.1 9.8 V18.5 H14.9"/>
<path d="M7.4 16.2 V18 M9.4 14.5 V18 M11.4 12.2 V18 M13.5 11.6 V18"/>
<path d="M71.5 13.2 L75 16.6 L78.5 13.2" stroke="#b5b5ba" stroke-width="0.9"/>
<circle cx="102.2" cy="14" r="4.3" stroke-width="1"/>
<path d="M105.3 17.2 L107.2 19.2" stroke-width="1.3"/>
<path d="M206.9 13.2 L210.5 16.6 L214.1 13.2" stroke="#b5b5ba" stroke-width="0.9"/>
<path d="M224.5 10.3 V19.5" stroke="#4b4c51"/>
<rect x="236.8" y="9.2" width="7.2" height="4.4" rx="0.6"/>
<rect x="236.8" y="15.2" width="7.2" height="4.4" rx="0.6"/>
<path d="M246.6 8.6 V20.8"/><path d="M246.6 10 L247.9 11.3 L246.6 12.6 L245.3 11.3Z M246.6 16.3 L247.9 17.6 L246.6 18.9 L245.3 17.6Z" fill="#2f3035"/>
<rect x="265.6" y="14.3" width="11.8" height="5.2" rx="0.6"/>
<rect x="270.2" y="9.3" width="2.6" height="2.8"/><rect x="274.4" y="9.3" width="3" height="2.8"/>
<rect x="294.6" y="8.6" width="11.4" height="11.8" rx="0.6"/>
<rect x="322.6" y="9.4" width="13" height="10" />
<path d="M323 18.4 L326 13.8 L328.2 16.5 L331 12.5 L335.2 18.4"/>
<g transform="rotate(-45 358 14.5)"><rect x="351.5" y="12.2" width="8" height="4.6" rx="2.3" stroke-width="1.3"/><rect x="356.5" y="12.2" width="8" height="4.6" rx="2.3" stroke-width="1.3"/></g>
<g transform="rotate(-45 576 14)"><rect x="570" y="12" width="7" height="4" rx="2" stroke-width="1.2"/><rect x="575" y="12" width="7" height="4" rx="2" stroke-width="1.2"/></g>
<path d="M594.5 10 V19.5" stroke="#4b4c51"/>
<rect x="607.3" y="8.2" width="9.6" height="12.5" rx="0.5"/>
<path d="M609.4 10.9 H614.8"/>
<path d="M607.4 16.6 H609.6 Q612.1 19.6 614.6 16.6 H616.8" stroke-width="1"/>
<path d="M641 12.2 V9.2 Q641.5 8.5 642 9.2 V12.2 M635.8 12.5 H646.3 V14.4 H635.8Z M636.2 14.4 L635.6 20.3 H646.6 L646 14.4 M638.7 17.6 V20.3 M643.3 17.6 V20.3"/>
<path d="M668 20.4 H663.6 V8.6 H673.4 V11"/>
<path d="M666.8 15.6 Q671 10.8 675.6 15.6 Q671 20.4 666.8 15.6Z"/>
<path d="M667 12 L675.4 19.6"/>
<path d="M694.6 8.2 H703.2 Q704.8 8.2 704.8 9.8 V18.4"/>
<rect x="692.4" y="10.2" width="10.6" height="10.6" rx="1"/>
<path d="M694.9 15.4 L697 17.4 L700.8 13.4" stroke-width="1.2"/>
<path d="M716.5 10 V19" stroke="#4b4c51"/>
<path d="M760.2 13.4 L762.6 15.8 L765 13.4" stroke="#a5a5aa" stroke-width="0.9"/>
<rect x="779.6" y="9.4" width="12.4" height="10.2" rx="0.8"/>
<path d="M780 11.6 H791.6 M782.6 13.5 V17.5 M785.8 13.5 V17.5 M789 13.5 V17.5" />
</g>
<g fill="#c9c9cd">
<path d="M102.2 11.8 L104.2 13.8 L102.2 16.4 L100.2 13.8Z"/>
<rect x="265.6" y="9.3" width="3.4" height="3.2"/>
<path d="M297 10.9 H304.2 V13.2 H303.4 L303.1 12 H301.3 V17.5 H302.5 V18.4 H298.7 V17.5 H299.9 V12 H298.1 L297.8 13.2 H297Z"/>
<circle cx="325.4" cy="11.9" r="1.1"/>
<rect x="609.2" y="12.6" width="5.8" height="1.9"/>
<path d="M578 15.3 H583.8 L581.6 17.6 V20.6 H580.2 V17.6Z"/>
<circle cx="671.2" cy="15.6" r="1"/>
</g>
</svg><div class="t " style="left:19.20px;top:8.92px;font-size:11.2px;color:#d2d2d6;font-weight:normal;">Add Chart</div><div class="t " style="left:112.00px;top:8.88px;font-size:11.25px;color:#d2d2d6;font-weight:normal;">Add Query Control</div><div class="t " style="left:729.50px;top:9.43px;font-size:10.6px;color:#d9d9dc;font-weight:normal;">100%</div><svg class="r" style="left:899px;top:302px" width="16" height="22"><path d="M2.6 2.4 L2.6 16 L5.8 13 L7.9 17.8 L10 16.9 L8 12.2 L12.4 12.2 Z" fill="#000" stroke="#fff" stroke-width="1.2" stroke-linejoin="round"/></svg>
</body></html>
